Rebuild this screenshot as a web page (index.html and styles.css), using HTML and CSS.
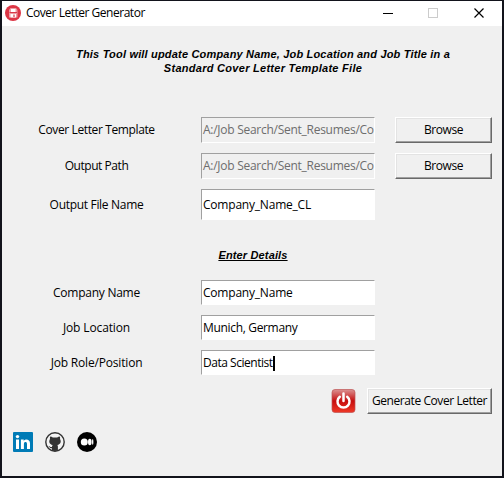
FILE: index.html
```html
<!DOCTYPE html>
<html lang="en">
<head>
<meta charset="utf-8">
<title>Cover Letter Generator</title>
<link rel="stylesheet" href="styles.css">
</head>
<body>
<main class="window">
  <header class="titlebar">
    <svg class="app-icon" width="16" height="16" viewBox="0 0 16 16"><circle cx="8" cy="8" r="8" fill="#dc3545"/><path d="M5.500 3H11l1.500 2v7.500H4V5z" fill="#ee9ca3"/><path d="M6 4h4.500v3H6zM5.500 9H11v3.500H5.500z" fill="#fff"/><path d="M4.500 7.500H12M9 9.500V12" stroke="#d83b49" stroke-width="1.200"/></svg>
    <h1 class="title">Cover Letter Generator</h1>
    <svg class="controls" width="104" height="12" viewBox="0 0 104 12" fill="none" shape-rendering="crispEdges"><path d="M0 6.500h10" stroke="#000"/><path d="M45.500 1.500h9v9h-9z" stroke="#ccc"/><path d="M91.500 1.500l9 9m0-9l-9 9" stroke="#000" stroke-width="1.200" shape-rendering="auto"/></svg>
  </header>
  <p class="intro"><span class="line-one">This Tool will update Company Name, Job Location and Job Title in a</span><br><span class="line-two">Standard Cover Letter Template File</span></p>
  <section class="form files">
    <label class="l-template">Cover Letter Template</label><div class="entry disabled"><span>A:/Job Search/Sent_Resumes/Co</span></div><button>Browse</button>
    <label class="l-path">Output Path</label><div class="entry disabled"><span>A:/Job Search/Sent_Resumes/Co</span></div><button>Browse</button>
    <label class="l-file">Output File Name</label><div class="entry"><span class="v-file">Company_Name_CL</span></div>
  </section>
  <h2 class="subtitle">Enter Details</h2>
  <section class="form details">
    <label class="l-company">Company Name</label><div class="entry"><span class="v-company">Company_Name</span></div>
    <label class="l-location">Job Location</label><div class="entry"><span class="v-location">Munich, Germany</span></div>
    <label class="l-role">Job Role/Position</label><div class="entry"><span class="v-role">Data Scientist</span><i class="caret"></i></div>
  </section>
  <div class="actions">
    <svg class="power" width="26" height="26" viewBox="0 0 26 26"><defs><linearGradient id="red" x2="0" y2="1"><stop stop-color="#dc9292"/><stop offset=".28" stop-color="#cf4949"/><stop offset=".5" stop-color="#c60d0d"/><stop offset="1" stop-color="#ef3927"/></linearGradient></defs><rect x="1" y="1.500" width="23" height="23" rx="3" fill="url(#red)" stroke="#bd5555" stroke-width=".7"/><path d="M8.800 8.800a6 6 0 1 0 7.400 0M12.500 5.500v7.500" fill="none" stroke="#fff" stroke-width="2.500" stroke-linecap="round"/></svg>
    <button class="generate">Generate Cover Letter</button>
  </div>
  <nav class="social">
    <svg width="20" height="20" viewBox="0 0 20 20"><rect width="20" height="20" rx="1" fill="#007bb6"/><circle cx="4.500" cy="4.600" r="1.700" fill="#fff"/><path d="M3 7.600h3V17H3zM7.900 7.600h2.800v1.300c1.300-2.400 6.300-2.100 6.300 2.300V17h-3v-5.100c0-2.500-3.100-2.300-3.100 0V17h-3z" fill="#fff"/></svg>
    <svg width="20" height="20" viewBox="0 0 20 20"><circle cx="10" cy="10" r="9.200" fill="#f4f4f4" stroke="#333" stroke-width="1.400"/><path d="M5.200 4.600c1 0 1.900.5 2.600 1h4.400c.7-.5 1.600-1 2.600-1 .4 1 .4 1.700.2 2.500 1.500 2.500.7 5.300-2.700 6 .6.700.6 1.400.6 2.200v3.200c-1.900.6-4 .6-5.900 0v-2.300c-2.600.3-2.500-1.700-3.800-2.200 1.500-.3 1.900 1.600 3.800 1 0-.7.100-1.300.7-1.900-3.400-.7-4.200-3.500-2.700-6-.2-.8-.2-1.500.2-2.500z" fill="#333"/></svg>
    <svg width="20" height="20" viewBox="0 0 20 20"><circle cx="10" cy="10" r="10" fill="#000"/><circle cx="7.300" cy="10" r="3.500" fill="#fff"/><ellipse cx="12.800" cy="10" rx="1.800" ry="3.300" fill="#fff"/><ellipse cx="15.700" cy="10" rx=".7" ry="2.900" fill="#fff"/></svg>
  </nav>
</main>
</body>
</html>
```
FILE: styles.css
```css
* { box-sizing: border-box; }
body {
  margin: 0;
  padding: 1px 2px 2px;
  height: 478px;
  overflow: hidden;
  background: #12131b;
  color: #000;
  font: 12px/16px "Open Sans", "Noto Sans", sans-serif;
}
.window { width: 500px; height: 475px; background: #f0f0f0; }
.titlebar { display: flex; align-items: center; height: 25px; padding: 0 15px 1px 3px; background: #fff; }
.title { flex: 1; margin: 0 0 0 5px; font-size: 12px; font-weight: 400; letter-spacing: -.48px; white-space: nowrap; }
.controls { flex: none; }
.intro { margin: 0; padding: 21px 0 0 22px; text-align: center; font: italic bold 11px/14px "Liberation Sans", sans-serif; white-space: nowrap; }
.line-one { letter-spacing: .18px; }
.line-two { letter-spacing: .28px; }
.form { display: grid; grid-template-columns: 189px 174px 97px; align-items: center; padding-left: 10px; row-gap: 10px; }
.form label { width: 189px; margin-left: -10px; text-align: center; white-space: nowrap; }
.files { grid-template-rows: 26px 26px 31px; padding-top: 42px; }
.files button { margin-left: 20px; width: 97px; }
.details { grid-template-columns: 189px 174px; grid-template-rows: repeat(3, 25px); padding-top: 18px; }
.form .l-file, .details label { padding-top: 1px; }
.entry { display: flex; align-items: center; height: 100%; padding: 1px 0 0 1px; overflow: hidden; white-space: nowrap; background: #fff; border: 1px solid #fff; border-top-color: #a0a0a0; border-left-color: #a0a0a0; }
.disabled { padding-top: 0; color: #6d6d6d; background: #f0f0f0; letter-spacing: -.27px; }
button { height: 26px; padding: 0; font: inherit; letter-spacing: -.42px; color: #000; white-space: nowrap; background: #f0f0f0; border: 1px solid; border-color: #fff #696969 #696969 #fff; border-radius: 0; box-shadow: inset -1px -1px #a0a0a0, inset 1px 1px #e3e3e3; }
.l-template { letter-spacing: -.38px; }
.l-path { letter-spacing: -.45px; }
.l-file { letter-spacing: -.31px; }
.l-company { letter-spacing: -.25px; }
.l-location { letter-spacing: -.13px; }
.l-role { letter-spacing: -.18px; }
.v-file, .v-company { letter-spacing: -.21px; }
.v-location { letter-spacing: -.33px; }
.v-role { letter-spacing: -.47px; }
.subtitle { margin: 28px 0 0; padding-left: 2px; text-align: center; font: italic bold 11px/14px "Liberation Sans", sans-serif; letter-spacing: .15px; text-decoration: underline; }
.caret { width: 2px; height: 15px; background: #000; }
.actions { display: flex; justify-content: flex-end; gap: 10px; padding: 13px 10px 0 0; }
.generate { width: 125px; }
.social { display: flex; gap: 12px; padding: 18px 11px 0; }
```
